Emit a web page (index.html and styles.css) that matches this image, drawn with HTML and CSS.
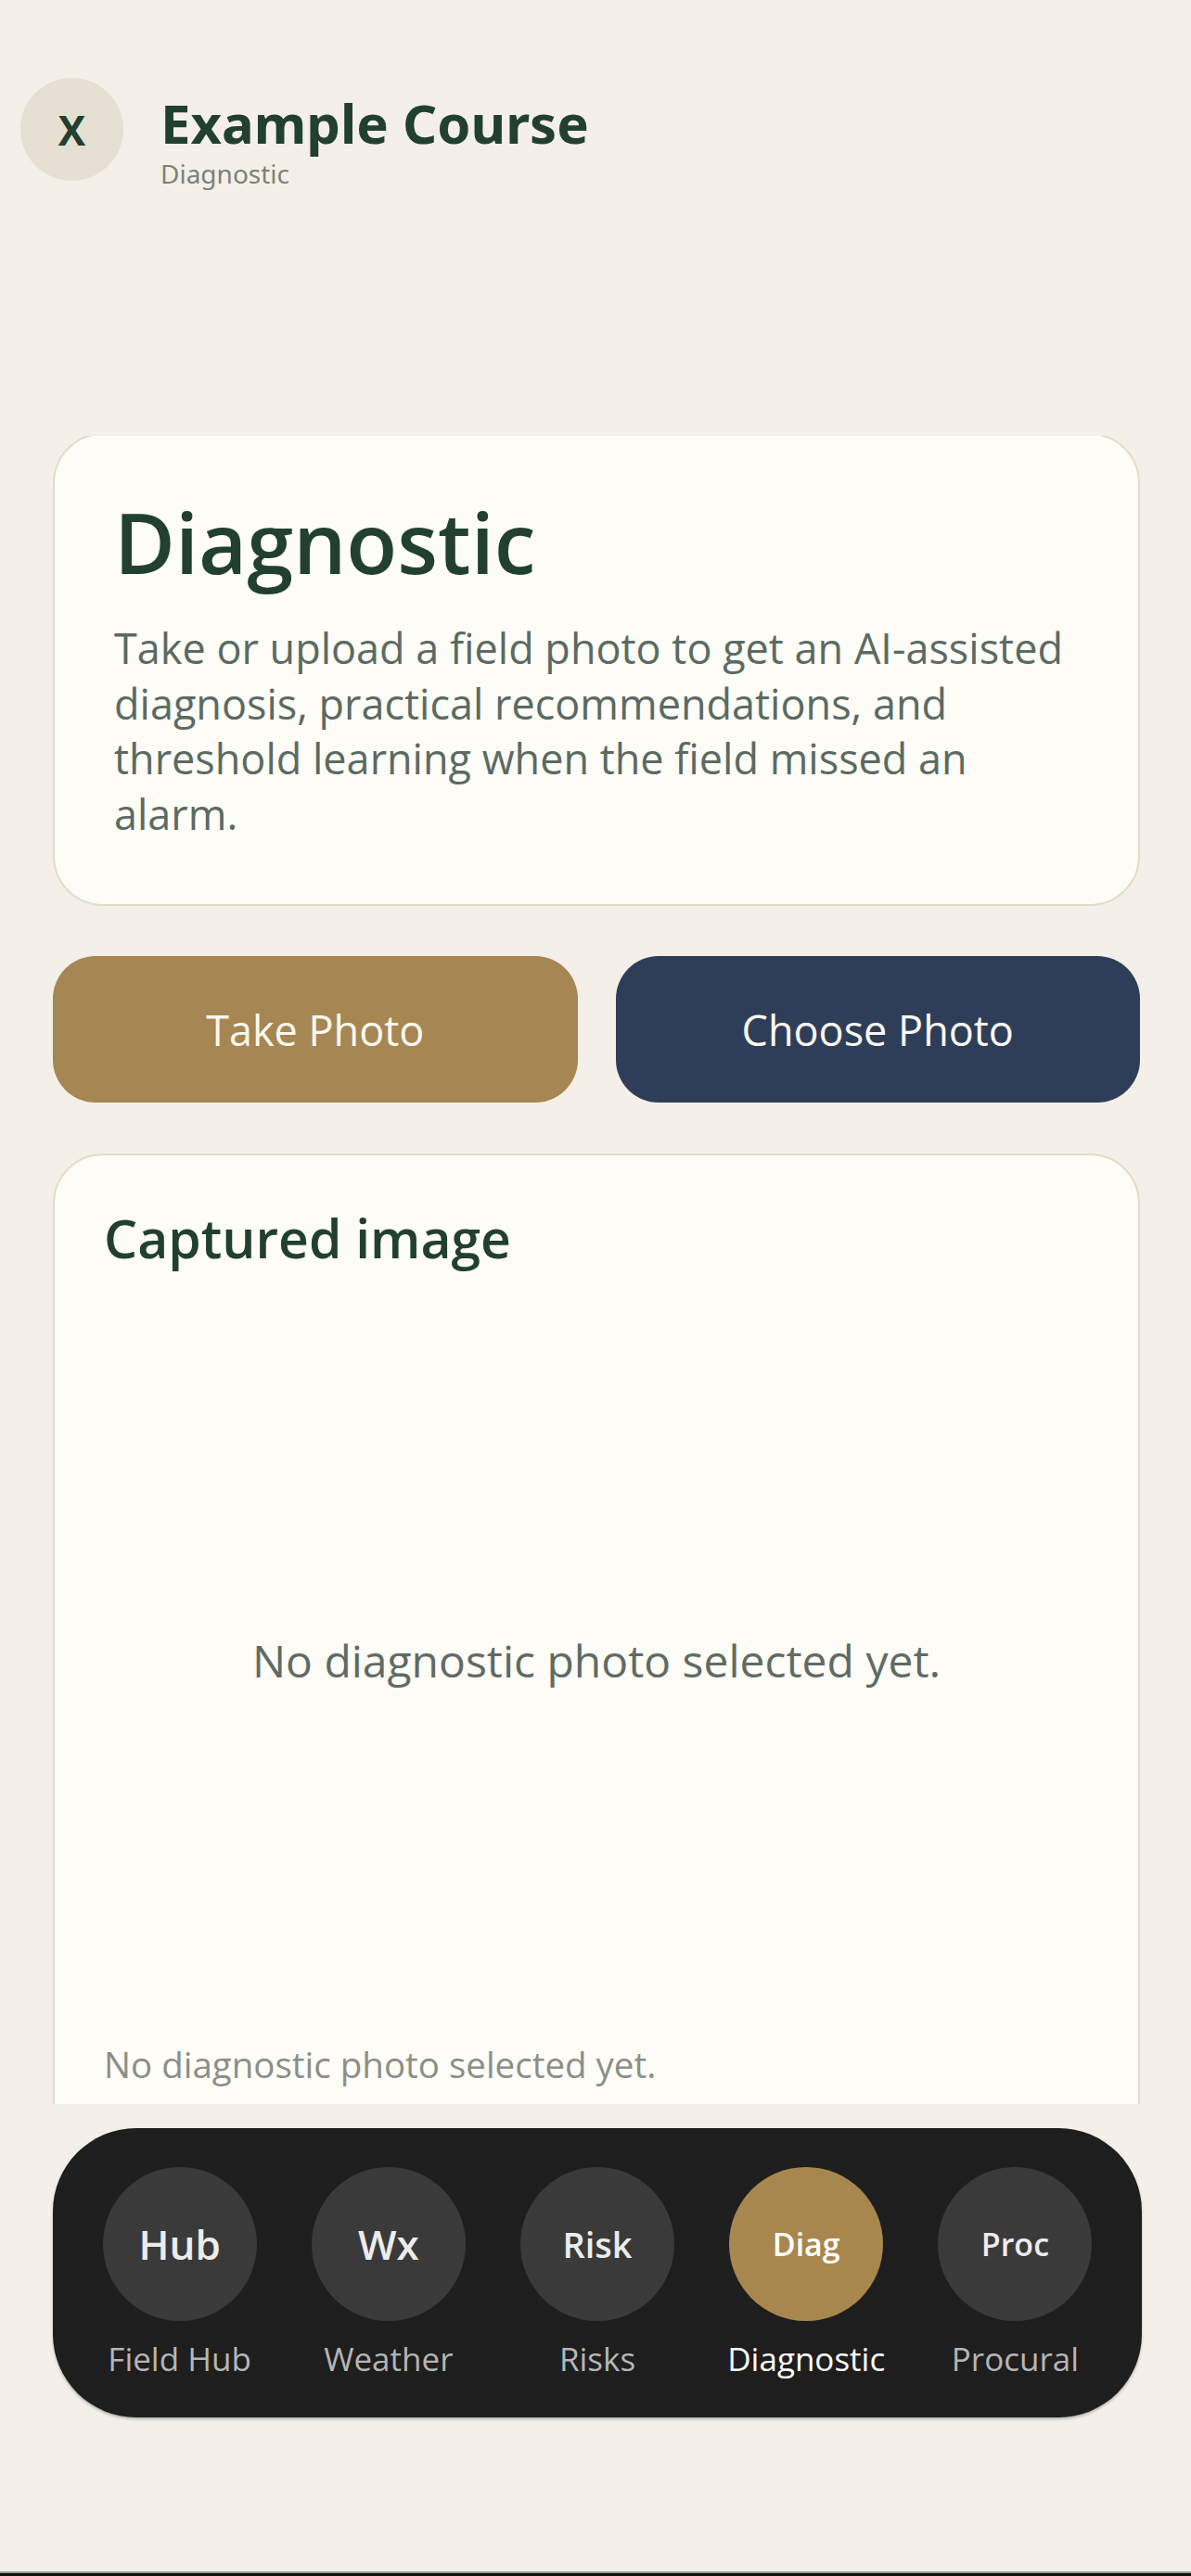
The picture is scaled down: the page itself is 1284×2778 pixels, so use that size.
FILE: index.html
```html
<!DOCTYPE html>
<html lang="en">
<head>
  <meta charset="UTF-8">
  <title>Example Course - Diagnostic</title>
  <link rel="stylesheet" href="styles.css">
</head>
<body>
  <div class="app">
    <header class="topbar">
      <button class="close-btn">X</button>
      <div class="titles">
        <div class="course-title">Example Course</div>
        <div class="course-sub">Diagnostic</div>
      </div>
    </header>

    <main class="scroll">
      <section class="card intro">
        <h1>Diagnostic</h1>
        <p>Take or upload a field photo to get an AI-assisted diagnosis, practical recommendations, and threshold learning when the field missed an alarm.</p>
      </section>

      <div class="actions">
        <button class="btn btn-gold">Take Photo</button>
        <button class="btn btn-navy">Choose Photo</button>
      </div>

      <section class="card capture">
        <h2>Captured image</h2>
        <div class="preview">No diagnostic photo selected yet.</div>
        <div class="caption">No diagnostic photo selected yet.</div>
      </section>
    </main>

    <nav class="tabbar">
      <div class="tab">
        <div class="tab-icon">Hub</div>
        <div class="tab-label">Field Hub</div>
      </div>
      <div class="tab">
        <div class="tab-icon">Wx</div>
        <div class="tab-label">Weather</div>
      </div>
      <div class="tab">
        <div class="tab-icon mid">Risk</div>
        <div class="tab-label">Risks</div>
      </div>
      <div class="tab active">
        <div class="tab-icon long">Diag</div>
        <div class="tab-label">Diagnostic</div>
      </div>
      <div class="tab">
        <div class="tab-icon long">Proc</div>
        <div class="tab-label">Procural</div>
      </div>
    </nav>

    <div class="filler"></div>
    <div class="home-line"></div>
  </div>
</body>
</html>
```

FILE: styles.css
```css
body {
  margin: 0;
  font-family: 'Open Sans', 'Noto Sans', sans-serif;
  background-color: #f4f0e9;
  color: #22402f;
}
.app {
  height: 2778px;
  display: flex;
  flex-direction: column;
  overflow: hidden;
}

/* header */
.topbar {
  display: flex;
  align-items: flex-start;
  gap: 40px;
  padding: 84px 22px 0;
  height: 470px;
  box-sizing: border-box;
  flex-shrink: 0;
}
.close-btn {
  width: 111px;
  height: 111px;
  border-radius: 50%;
  border: none;
  background: #e6e0d2;
  color: #22402f;
  font-family: 'Open Sans', sans-serif;
  font-weight: 700;
  font-size: 44px;
  padding: 0;
}
.titles {
  margin-top: 16px;
  font-family: 'Noto Sans', sans-serif;
}
.course-title {
  font-size: 58px;
  line-height: 66px;
  font-weight: 700;
  color: #22402f;
}
.course-sub {
  margin-top: 4px;
  font-size: 28px;
  line-height: 34px;
  color: #7b8279;
}

/* scroll area */
.scroll {
  height: 1799px;
  overflow: hidden;
  padding: 0 55px 0 57px;
  flex-shrink: 0;
}
.card {
  background: #fdfcf6;
  border: 2px solid #e3dcc9;
  border-radius: 54px;
}
.intro {
  margin-top: -3px;
  padding: 61px 62px 68px 64px;
}
.intro h1 {
  margin: 0;
  font-size: 90px;
  line-height: 108px;
  font-weight: 600;
  color: #22402f;
}
.intro p {
  margin: 31px 0 0;
  font-size: 45px;
  line-height: 59.5px;
  color: #5b6a62;
}

.actions {
  display: flex;
  gap: 41px;
  margin: 54px 0 55px;
}
.btn {
  flex: 1;
  height: 158px;
  border: none;
  border-radius: 46px;
  color: #fbf8f0;
  font-family: 'Open Sans', sans-serif;
  font-size: 45px;
}
.btn-gold {
  background: #a68652;
}
.btn-navy {
  background: #2f3e58;
}

.capture {
  padding: 50px 53px 80px;
}
.capture h2 {
  margin: 0;
  font-size: 57px;
  line-height: 78px;
  font-weight: 600;
  color: #22402f;
}
.preview {
  height: 784px;
  margin-top: 24px;
  display: flex;
  align-items: center;
  justify-content: center;
  font-size: 48px;
  color: #5f6b64;
}
.caption {
  margin-top: 18px;
  font-size: 38.5px;
  color: #8a8f88;
}

/* bottom tabs */
.tabbar {
  margin: 26px 53px 0 57px;
  padding: 42px 24px 40px;
  background: #1e1e1e;
  border-radius: 90px;
  display: flex;
  box-shadow: 0 2px 3px rgba(0, 0, 0, 0.25);
  flex-shrink: 0;
}
.tab {
  flex: 1;
  display: flex;
  flex-direction: column;
  align-items: center;
  gap: 18px;
}
.tab-icon {
  width: 166px;
  height: 166px;
  border-radius: 50%;
  background: #3a3a3a;
  color: #ececec;
  display: flex;
  align-items: center;
  justify-content: center;
  font-size: 44px;
  font-weight: 600;
}
.tab-icon.mid {
  font-size: 38px;
}
.tab-icon.long {
  font-size: 34px;
}
.tab-label {
  font-size: 35px;
  line-height: 46px;
  color: #b5b5b5;
}
.tab.active .tab-icon {
  background: #a8874f;
  color: #fff;
}
.tab.active .tab-label {
  color: #fff;
}

.filler {
  flex: 1;
}
.home-line {
  height: 3px;
  background: #111;
  border-top: 2px solid #9a9893;
  flex-shrink: 0;
}
```
